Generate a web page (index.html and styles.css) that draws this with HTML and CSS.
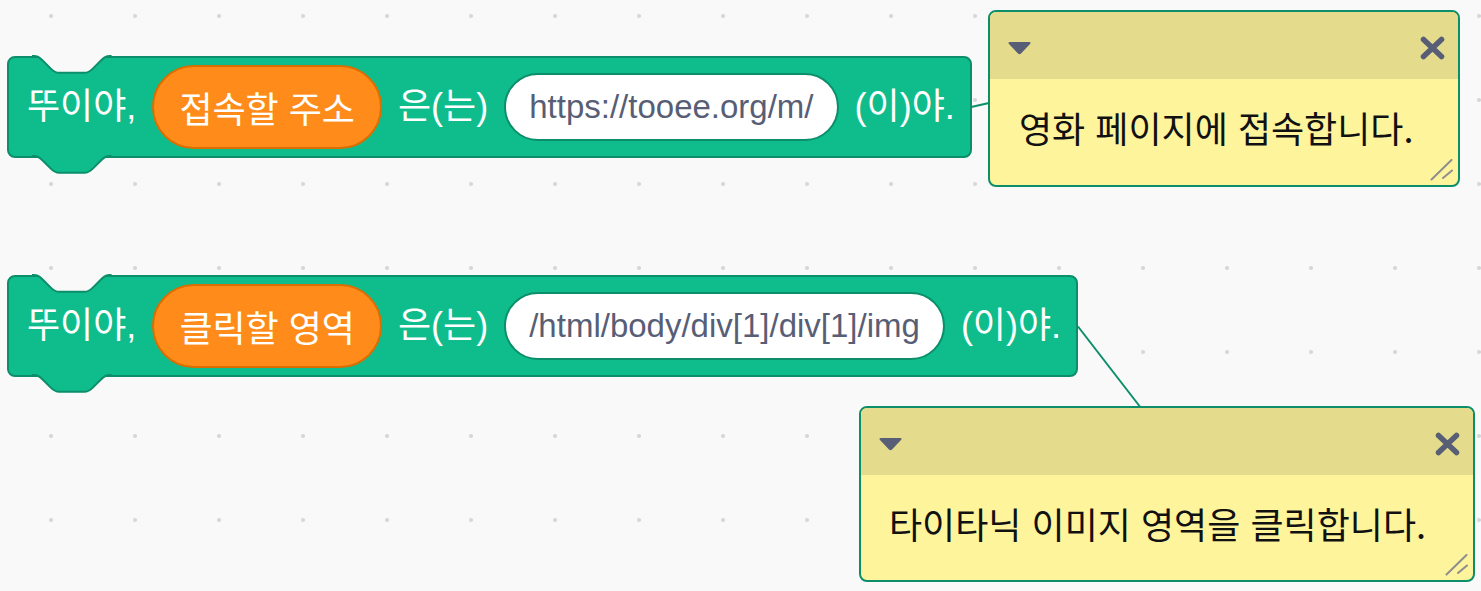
FILE: index.html
```html
<!DOCTYPE html>
<html lang="ko">
<head>
<meta charset="utf-8">
<title>Workspace</title>
<link rel="stylesheet" href="styles.css">
</head>
<body>
<div class="workspace">
  <svg class="links" width="1481" height="591" viewBox="0 0 1481 591">
    <line x1="969" y1="107.5" x2="989" y2="103" />
    <line x1="1078" y1="326.5" x2="1141" y2="408" />
  </svg>

  <div class="block block-1">
    <svg class="notch" width="80" height="20" viewBox="0 0 80 20"><path d="M0 1 h2 c4.2 0 6.3 2.1 8.4 4.2 l8.4 8.4 c2.1 2.1 4.2 4.2 8.4 4.2 h25.2 c4.2 0 6.3 -2.1 8.4 -4.2 l8.4 -8.4 c2.1 -2.1 4.2 -4.2 8.4 -4.2 h2" /></svg>
    <span class="label">뚜이야,</span>
    <span class="reporter">접속할 주소</span>
    <span class="label">은(는)</span>
    <span class="field">https://tooee.org/m/</span>
    <span class="label">(이)야.</span>
    <svg class="tab" width="80" height="20" viewBox="0 0 80 20"><path d="M0 1 h2 c4.2 0 6.3 2.1 8.4 4.2 l8.4 8.4 c2.1 2.1 4.2 4.2 8.4 4.2 h25.2 c4.2 0 6.3 -2.1 8.4 -4.2 l8.4 -8.4 c2.1 -2.1 4.2 -4.2 8.4 -4.2 h2" /></svg>
  </div>

  <div class="block block-2">
    <svg class="notch" width="80" height="20" viewBox="0 0 80 20"><path d="M0 1 h2 c4.2 0 6.3 2.1 8.4 4.2 l8.4 8.4 c2.1 2.1 4.2 4.2 8.4 4.2 h25.2 c4.2 0 6.3 -2.1 8.4 -4.2 l8.4 -8.4 c2.1 -2.1 4.2 -4.2 8.4 -4.2 h2" /></svg>
    <span class="label">뚜이야,</span>
    <span class="reporter">클릭할 영역</span>
    <span class="label">은(는)</span>
    <span class="field">/html/body/div[1]/div[1]/img</span>
    <span class="label">(이)야.</span>
    <svg class="tab" width="80" height="20" viewBox="0 0 80 20"><path d="M0 1 h2 c4.2 0 6.3 2.1 8.4 4.2 l8.4 8.4 c2.1 2.1 4.2 4.2 8.4 4.2 h25.2 c4.2 0 6.3 -2.1 8.4 -4.2 l8.4 -8.4 c2.1 -2.1 4.2 -4.2 8.4 -4.2 h2" /></svg>
  </div>

  <div class="comment comment-1">
    <div class="comment-head">
      <svg class="caret" width="25" height="16" viewBox="0 0 25 16"><path d="M3 2 H22 Q24.5 2 23 4 L14 13.5 Q12.5 15 11 13.5 L2 4 Q0.5 2 3 2 Z" /></svg>
      <svg class="close" width="25" height="24" viewBox="0 0 25 24"><path d="M3.5 3.5 L21.5 20.5 M21.5 3.5 L3.5 20.5" /></svg>
    </div>
    <div class="comment-body">
      <p class="comment-text">영화 페이지에 접속합니다.</p>
      <svg class="resize" width="24" height="22" viewBox="0 0 24 22"><path d="M1.5 20.5 L21.5 1 M13 19 L22 11.5" /></svg>
    </div>
  </div>

  <div class="comment comment-2">
    <div class="comment-head">
      <svg class="caret" width="25" height="16" viewBox="0 0 25 16"><path d="M3 2 H22 Q24.5 2 23 4 L14 13.5 Q12.5 15 11 13.5 L2 4 Q0.5 2 3 2 Z" /></svg>
      <svg class="close" width="25" height="24" viewBox="0 0 25 24"><path d="M3.5 3.5 L21.5 20.5 M21.5 3.5 L3.5 20.5" /></svg>
    </div>
    <div class="comment-body">
      <p class="comment-text">타이타닉 이미지 영역을 클릭합니다.</p>
      <svg class="resize" width="24" height="22" viewBox="0 0 24 22"><path d="M1.5 20.5 L21.5 1 M13 19 L22 11.5" /></svg>
    </div>
  </div>
</div>
</body>
</html>
```

FILE: styles.css
```css
* { box-sizing: border-box; }

html, body {
  margin: 0;
  padding: 0;
  background: #f9f9f9;
}

.workspace {
  position: relative;
  width: 1481px;
  height: 591px;
  overflow: hidden;
  background-color: #f9f9f9;
  background-image: radial-gradient(circle at 51px 16px, #d8d8d8 0, #d8d8d8 1.6px, rgba(216,216,216,0) 2.4px);
  background-size: 84px 84px;
  font-family: "Liberation Sans", "Noto Sans CJK KR", sans-serif;
}

.links {
  position: absolute;
  left: 0;
  top: 0;
}

.links line {
  stroke: #0b8e69;
  stroke-width: 2;
}

.block {
  position: absolute;
  display: flex;
  align-items: center;
  gap: 16px;
  height: 102px;
  padding: 0 15px 0 18px;
  background: #0fbd8c;
  border: 2px solid #0b8e69;
  border-radius: 8px;
  color: #ffffff;
  font-size: 36px;
  white-space: nowrap;
}

.block-1 { left: 7px; top: 56px; }
.block-2 { left: 7px; top: 275px; }

.notch {
  position: absolute;
  left: 23px;
  top: -3px;
}

.notch path {
  fill: #f9f9f9;
  stroke: #0b8e69;
  stroke-width: 2;
}

.tab {
  position: absolute;
  left: 23px;
  bottom: -19px;
}

.tab path {
  fill: #0fbd8c;
  stroke: #0b8e69;
  stroke-width: 2;
}

.label {
  line-height: 1;
}

.reporter {
  display: flex;
  align-items: center;
  height: 84px;
  padding: 0 25px;
  background: #ff8c1a;
  border: 2px solid #db6e00;
  border-radius: 42px;
  color: #ffffff;
}

.field {
  display: flex;
  align-items: center;
  height: 68px;
  padding: 0 23px;
  background: #ffffff;
  border: 2px solid #0b8e69;
  border-radius: 34px;
  color: #575e75;
  font-size: 33px;
}

.comment {
  position: absolute;
  display: flex;
  flex-direction: column;
  border: 2px solid #0b8e69;
  border-radius: 8px;
  overflow: hidden;
  background: #fef49c;
}

.comment-1 { left: 988px; top: 10px; width: 472px; height: 177px; }
.comment-2 { left: 859px; top: 406px; width: 616px; height: 176px; }

.comment-head {
  display: flex;
  align-items: center;
  justify-content: space-between;
  height: 67px;
  flex: none;
  padding: 5px 13px 0 17px;
  background: #e4db8c;
}

.caret path {
  fill: #575e75;
}

.close path {
  stroke: #575e75;
  stroke-width: 5.5;
  stroke-linecap: round;
  fill: none;
}

.comment-body {
  position: relative;
  flex: 1;
  display: flex;
  align-items: center;
  padding: 0 0 8px 29px;
}

.comment-2 .comment-body { padding-left: 28px; }

.comment-text {
  margin: 0;
  color: #111111;
  font-family: "Noto Sans CJK KR", sans-serif;
  font-size: 36px;
  line-height: 1.2;
  white-space: nowrap;
}

.resize {
  position: absolute;
  right: 4px;
  bottom: 4px;
}

.resize path {
  stroke: #8e8e8e;
  stroke-width: 2;
  fill: none;
  stroke-linecap: round;
}
```
